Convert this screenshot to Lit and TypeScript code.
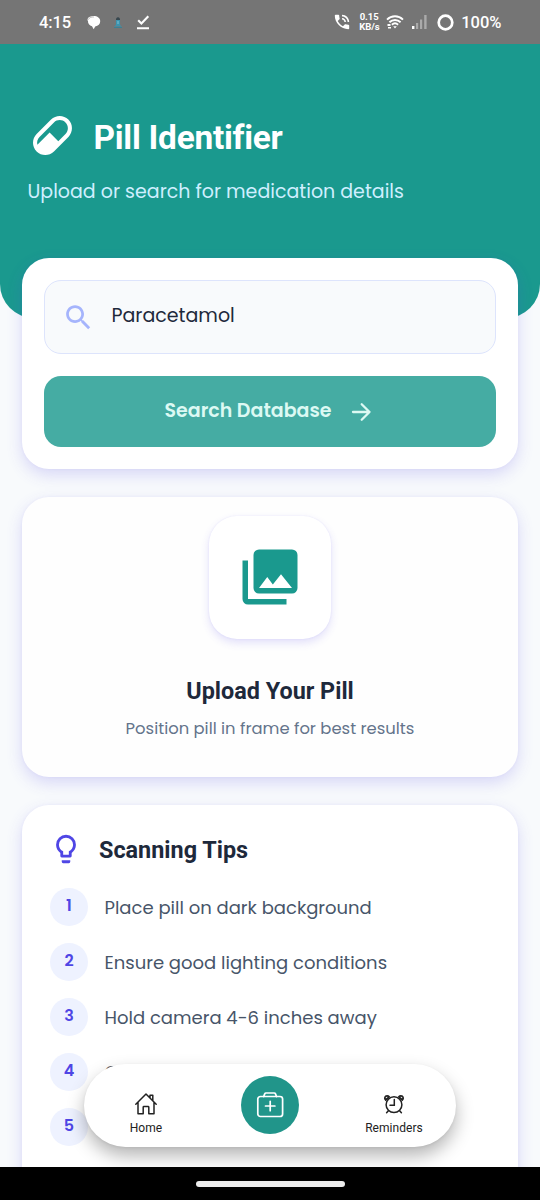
import { LitElement, html, css, svg } from "lit";
import { customElement } from "lit/decorators.js";

const TIPS = [
  "Place pill on dark background",
  "Ensure good lighting conditions",
  "Hold camera 4-6 inches away",
  "Capture both sides",
  "",
];

const icon = (size: number, body: unknown, box = "0 0 24 24") =>
  html`<svg width=${size} height=${size} viewBox=${box} fill="currentColor">${body}</svg>`;

@customElement("status-bar")
class StatusBar extends LitElement {
  static styles = css`
    :host { display: flex; justify-content: space-between; height: 44px; box-sizing: border-box;
      padding: 0 38.500px 0 39px; background: #757575; color: #fff; font: 500 16.500px/44px Roboto, sans-serif; }
    .side { display: flex; align-items: center; height: 44px; }
    svg { display: block; flex: none; }
    .time { padding-top: 1px; width: 47px; letter-spacing: -0.1px; }
    .person { margin-left: 12px; }
    .check { margin-left: 13px; }
    .rate { font-size: 9.500px; line-height: 10px; font-weight: 700; text-align: center; width: 20px; margin: 0 7px 0 9px; white-space: nowrap; }
    .signal { margin-left: 7px; }
    .ring { margin-left: 9px; }
    .pct { padding-top: 1px; margin-left: 7px; }
  `;
  render() {
    return html`
      <div class="side">
        <span class="time">4:15</span>
        <svg width="15" height="15" viewBox="0 0 15 15"><path d="M7.500 1C11.500 1 14.200 3 14.200 6.200c0 2.700-2 4.700-5 5.200L7.700 14.300 6 11.200C3.500 10.500 1.700 8.500 2 6 .8 5 1.500 1 7.500 1z" fill="#fff"/><path d="M1.800 5C3 2.600 5.500 1.800 8 2" fill="none" stroke="#999" stroke-width=".6"/></svg>
        <svg class="person" width="10" height="13" viewBox="0 0 10 13"><path d="M3 2.500Q5 .2 7 2.500V4H3z" fill="#37474f"/><path d="M3 4h4v5l2 1.500H1L3 9z" fill="#3d93ae"/><path d="M1 11.500h8" stroke="#3d7f92" stroke-width="1"/><path d="M5 5v3" stroke="#9fd8e6" stroke-width=".7"/></svg>
        <svg class="check" width="14" height="15" viewBox="0 0 14 15"><path d="M2.200 5.300 5.400 8.500 12.300 1.300M1 13.200h12" fill="none" stroke="#fff" stroke-width="2.100"/></svg>
      </div>
      <div class="side">
        <svg width="16" height="16" viewBox="2 2 20 20" fill="#fff"><path d="M20 15.500c-1.250 0-2.450-.2-3.570-.57-.35-.11-.74-.03-1.020.24l-2.200 2.200c-2.830-1.440-5.150-3.750-6.590-6.580l2.200-2.210c.28-.27.36-.66.25-1.010C8.700 6.450 8.500 5.250 8.500 4c0-.55-.45-1-1-1H4c-.55 0-1 .45-1 1 0 9.390 7.610 17 17 17 .55 0 1-.45 1-1v-3.500c0-.55-.45-1-1-1zM19 12h2c0-4.970-4.030-9-9-9v2c3.870 0 7 3.130 7 7zm-4 0h2c0-2.760-2.240-5-5-5v2c1.660 0 3 1.340 3 3z"/></svg>
        <div class="rate">0.15<br />KB/s</div>
        <svg width="18" height="16" viewBox="0 0 18 16"><g fill="none" stroke="#fff" stroke-width="1.900"><path d="M1 5.600C5.500 1.200 12.500 1.200 17 5.600M3.400 8.300c3.200-3 8-3 11.200 0M5.900 10.800c1.800-1.700 4.400-1.700 6.200 0"/></g><path d="M7.200 12.200h3.600L9 14.400zM1.500 10h3v2h-3zM2 13h3v1.500H2z" fill="#fff"/></svg>
        <svg class="signal" width="17" height="16" viewBox="0 0 17 16"><rect x="1" y="12" width="2.400" height="3" fill="#fff"/><g fill="#aaa"><rect x="5" y="9" width="2.200" height="6"/><rect x="9" y="5.500" width="2.200" height="9.500"/><rect x="13.200" y="1" width="2.400" height="14"/></g></svg>
        <svg class="ring" width="17" height="17" viewBox="0 0 17 17"><circle cx="8.500" cy="8.500" r="6.800" fill="none" stroke="#fff" stroke-width="2.700"/></svg>
        <span class="pct">100%</span>
      </div>`;
  }
}

@customElement("bottom-nav")
class BottomNav extends LitElement {
  static styles = css`
    :host { display: grid; grid-template-columns: 1fr 1fr 1fr; align-items: center; width: 372px; height: 83px;
      border-radius: 42px; background: #fff; box-shadow: 0 9px 18px rgba(0, 0, 0, 0.29), 0 1px 3px rgba(0, 0, 0, 0.06);
      font: 400 12px/16px Roboto, sans-serif; color: #222; letter-spacing: 0.05px; }
    .item { display: flex; flex-direction: column; align-items: center; gap: 4px; padding-top: 17px; }
    .fab { justify-self: center; display: grid; place-items: center; width: 58px; height: 58px; border-radius: 50%; background: #21958a; }
    svg { display: block; }
  `;
  render() {
    return html`
      <div class="item">
        <svg width="24" height="24" viewBox="0 0 24 24" fill="none" stroke="#222" stroke-width="1.500" stroke-linejoin="round" stroke-linecap="round"><path d="M1.800 12.200 12 2l10.200 10.200M4 10.500v11.300h5.200v-6.600q0-.7.7-.7h4.200q.7 0 .7.700v6.600H20V10.500M16 5.500V3.300h2.800v5"/></svg>
        <span>Home</span>
      </div>
      <div class="fab">
        <svg width="28" height="28" viewBox="0 0 28 28" fill="none" stroke="#fff" stroke-width="1.700" stroke-linejoin="round" stroke-linecap="round"><rect x="1.800" y="5.500" width="24.800" height="20" rx="2.600"/><path d="M7.700 5.500 8.700 2.900q.3-.9 1.300-.9h8.200q1 0 1.300.9l1 2.600M14.200 10.300v9.400M9.500 15h9.400"/></svg>
      </div>
      <div class="item">
        <svg width="24" height="24" viewBox="0 0 24 24" fill="none" stroke="#222" stroke-width="1.500" stroke-linecap="round"><circle cx="12" cy="12.700" r="7.900"/><path d="M12.300 7.600v5.600H8M6.400 18.700 4.600 20.800M17.600 18.700l1.800 2.100"/><path d="M3.600 8C2 6.500 3 3.800 5 3.800c1 0 1.700.4 2.100 1zM20.400 8C22 6.500 21 3.800 19 3.800c-1 0-1.700.4-2.100 1z" stroke-width="1.700"/></svg>
        <span>Reminders</span>
      </div>`;
  }
}

@customElement("app-root")
class AppRoot extends LitElement {
  static styles = css`
    :host { display: flex; flex-direction: column; position: relative; width: 540px; height: 1200px; overflow: hidden;
      background: #f8fafc; font-family: Poppins, Inter, sans-serif; }
    * { box-sizing: border-box; }
    svg { display: block; flex: none; }
    status-bar { flex: none; }
    .screen { flex: 1; min-height: 0; overflow: hidden; }
    .hero { height: 274px; padding: 67px 27.500px 0; background: #1a998e; border-radius: 0 0 34px 34px; color: #fff; }
    .brand { display: flex; align-items: center; gap: 17px; height: 49px; }
    h1, h2, p { margin: 0; font-family: Roboto, sans-serif; white-space: nowrap; }
    h1 { font-size: 33.400px; font-weight: 700; line-height: 40px; padding-top: 5px; letter-spacing: -0.25px; }
    .sub { font: 400 19px/28px Poppins, Inter, sans-serif; margin-top: 18px; color: #cfefff; }
    .stack { display: flex; flex-direction: column; gap: 28px; padding: 0 22px; margin-top: -60px; }
    .card { background: #fff; border-radius: 27px; box-shadow: 0 6px 16px rgba(79, 70, 229, 0.19), 0 0 3px rgba(79, 70, 229, 0.06); }
    .search { height: 211px; padding: 22px; display: flex; flex-direction: column; gap: 22px; }
    .field { height: 74px; border: 1px solid #dde4fc; border-radius: 17px; background: #f8fafc; display: flex; align-items: center;
      padding: 0 17px; gap: 16.500px; color: #1e293b; font-size: 19px; }
    .field span { padding-bottom: 4px; }
    .lens { color: #a5b4fc; }
    .btn { height: 71px; border: 0; border-radius: 17px; background: #45aca3; color: #dcf9f3; display: flex; align-items: center; justify-content: center;
      gap: 18px; font: 600 19px/28px Poppins, Inter, sans-serif; padding: 0 2px 0 0; }
    .btn span { padding-bottom: 2px; }
    .upload { height: 280px; display: flex; flex-direction: column; align-items: center; padding-top: 19px; background: #fefefe; }
    .tile { width: 122px; height: 123px; border-radius: 28px; background: #fff; color: #1a998e; display: grid; place-items: center; padding-bottom: 2px;
      box-shadow: 0 4px 9px rgba(79, 70, 229, 0.16), 0 0 2px rgba(79, 70, 229, 0.1); }
    h2 { font-size: 23.400px; font-weight: 700; line-height: 30px; color: #1e293b; }
    .upload h2 { margin-top: 37px; }
    .hint { font: 400 16.400px/24px Poppins, Inter, sans-serif; color: #64748b; margin-top: 11px; }
    .tips { height: 400px; padding: 28px; }
    .tips-head { display: flex; align-items: center; gap: 16px; height: 34px; color: #4f46e5; }
    .tips-head svg { margin: -2px 0 0 -1px; }
    .list { display: flex; flex-direction: column; gap: 17px; margin-top: 21px; }
    .tip { display: flex; align-items: center; gap: 16.500px; height: 38px; color: #475569; font-size: 18px; white-space: nowrap; }
    .num { flex: none; width: 38px; height: 38px; border-radius: 50%; background: #eef2ff; color: #4f46e5; font-weight: 600; font-size: 16px;
      line-height: 36px; text-align: center; }
    bottom-nav { position: absolute; left: 84px; bottom: 53.500px; }
    .system { flex: none; height: 33px; background: #000; display: grid; place-items: center; }
    .handle { width: 149px; height: 6px; border-radius: 3px; background: #ececec; }
  `;
  render() {
    return html`
      <status-bar></status-bar>
      <div class="screen">
        <header class="hero">
          <div class="brand">
            ${icon(49, svg`<path d="M4.220,11.290L11.290,4.220C13.640,1.880 17.430,1.880 19.780,4.220C22.120,6.560 22.120,10.360 19.780,12.710L12.710,19.780C10.360,22.120 6.560,22.120 4.220,19.780C1.880,17.430 1.880,13.640 4.220,11.290M5.640,12.710C4.590,13.750 4.240,15.240 4.600,16.570L10.590,10.590L14.830,14.830L18.360,11.290C19.930,9.730 19.930,7.200 18.360,5.640C16.800,4.070 14.270,4.070 12.710,5.640L5.640,12.710Z"/>`)}
            <h1>Pill Identifier</h1>
          </div>
          <p class="sub">Upload or search for medication details</p>
        </header>
        <div class="stack">
          <section class="card search">
            <div class="field">
              <div class="lens">${icon(33, svg`<path d="M15.500 14h-.79l-.28-.27C15.410 12.590 16 11.110 16 9.500 16 5.910 13.090 3 9.500 3S3 5.910 3 9.500 5.910 16 9.500 16c1.610 0 3.090-.59 4.230-1.570l.27.280v.79l5 4.990L20.490 19l-4.990-5zm-6 0C7.010 14 5 11.990 5 9.500S7.010 5 9.500 5 14 7.010 14 9.500 11.990 14 9.500 14z"/>`)}</div>
              <span>Paracetamol</span>
            </div>
            <button class="btn">
              <span>Search Database</span>
              <svg width="24" height="24" viewBox="0 0 24 24" fill="none" stroke="currentColor" stroke-width="2.300" stroke-linecap="round" stroke-linejoin="round"><path d="M4 12h16.500M12.700 4.200l7.800 7.800-7.800 7.800"/></svg>
            </button>
          </section>
          <section class="card upload">
            <div class="tile">${icon(66, svg`<path d="M22,16V4A2,2 0 0,0 20,2H8A2,2 0 0,0 6,4V16A2,2 0 0,0 8,18H20A2,2 0 0,0 22,16M11,12L13.030,14.710L16,11L20,16H8M2,6V20A2,2 0 0,0 4,22H18V20H4V6"/>`)}</div>
            <h2>Upload Your Pill</h2>
            <p class="hint">Position pill in frame for best results</p>
          </section>
          <section class="card tips">
            <div class="tips-head">
              ${icon(34, svg`<path d="M12,2A7,7 0 0,1 19,9C19,11.380 17.810,13.470 16,14.740V17A1,1 0 0,1 15,18H9A1,1 0 0,1 8,17V14.740C6.190,13.470 5,11.380 5,9A7,7 0 0,1 12,2M9,21V20H15V21A1,1 0 0,1 14,22H10A1,1 0 0,1 9,21M12,4A5,5 0 0,0 7,9C7,11.050 8.230,12.810 10,13.580V16H14V13.580C15.770,12.810 17,11.050 17,9A5,5 0 0,0 12,4Z"/>`)}
              <h2>Scanning Tips</h2>
            </div>
            <div class="list">
              ${TIPS.map((text, i) => html`<div class="tip"><div class="num">${i + 1}</div><span>${text}</span></div>`)}
            </div>
          </section>
        </div>
      </div>
      <bottom-nav></bottom-nav>
      <div class="system"><div class="handle"></div></div>`;
  }
}
